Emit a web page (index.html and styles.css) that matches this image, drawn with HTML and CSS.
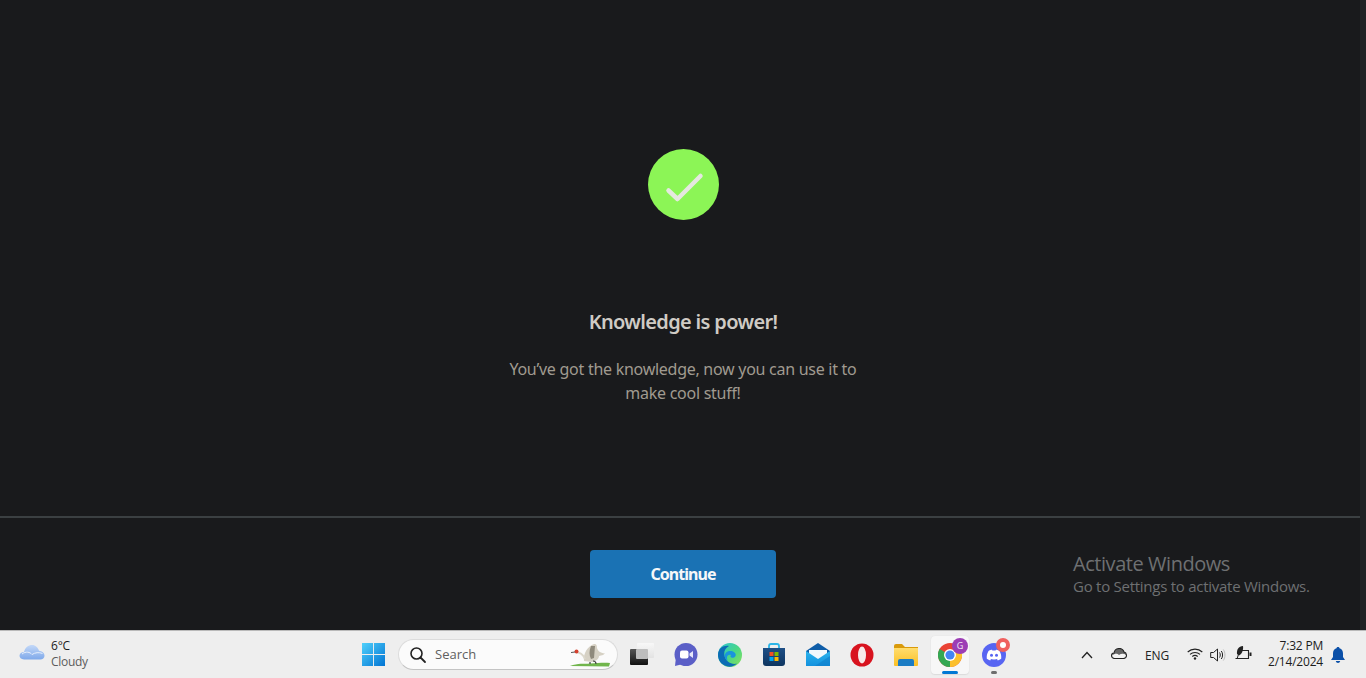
FILE: index.html
```html
<!DOCTYPE html>
<html lang="en">
<head>
<meta charset="utf-8">
<title>Knowledge is power!</title>
<link rel="stylesheet" href="styles.css">
</head>
<body>
<div class="app">
  <main class="content">
    <div class="badge">
      <svg viewBox="0 0 71 71" width="71" height="71"><circle cx="35.500" cy="35.500" r="35.500" fill="#8cf556"/><path d="M20.500 41.500 L29.500 50 L52.500 27" fill="none" stroke="#e5e8e0" stroke-width="4.500" stroke-linecap="round" stroke-linejoin="round"/></svg>
    </div>
    <h1 class="title">Knowledge is power!</h1>
    <p class="body-text">You’ve got the knowledge, now you can use it to make cool stuff!</p>
  </main>
  <footer class="actions">
    <button class="continue">Continue</button>
  </footer>
  <div class="watermark">
    <div class="wm-title">Activate Windows</div>
    <div class="wm-sub">Go to Settings to activate Windows.</div>
  </div>
</div>
<nav class="taskbar">
  <div class="weather">
    <svg class="weather-icon" viewBox="0 0 26 18" width="26" height="18"><defs><linearGradient id="cl" x1="0" y1="0" x2="0" y2="1"><stop offset="0" stop-color="#c3d8f8"/><stop offset="1" stop-color="#7fa9ea"/></linearGradient></defs><path d="M5 16.500 C2 16.500 .5 14.500 .5 12.800 C.5 10.500 2.500 9 5 9 C6 4.500 9.500 2 13 2 C16.500 2 19 4.500 20 7.800 C23 8 25.500 10 25.500 12.800 C25.500 15 23.500 16.500 21.500 16.500 Z" fill="url(#cl)"/><path d="M3 11 C7 8 11 9 13 11.500 C16 9.500 20 9 23.500 10.500" fill="none" stroke="#e6effc" stroke-width="1"/></svg>
    <div class="weather-text"><div class="temp">6°C</div><div class="cond">Cloudy</div></div>
  </div>
  <div class="center">
    <span class="tb-item"><svg viewBox="0 0 24 24" width="23" height="23"><defs><linearGradient id="win" x1="0" y1="0" x2="1" y2="1"><stop offset="0" stop-color="#4fd0fb"/><stop offset="1" stop-color="#0274d3"/></linearGradient></defs><path d="M0 0H11.500V11.500H0ZM12.500 0H24V11.500H12.500ZM0 12.500H11.500V24H0ZM12.500 12.500H24V24H12.500Z" fill="url(#win)"/></svg></span>
    <div class="search">
      <svg viewBox="0 0 18 18" width="18" height="18"><circle cx="7.500" cy="7.500" r="5.500" fill="none" stroke="#222" stroke-width="1.600"/><path d="M11.500 11.500 L16 16" stroke="#222" stroke-width="1.800" stroke-linecap="round"/></svg>
      <span class="search-label">Search</span>
      <svg class="crane" viewBox="0 0 40 24" width="40" height="24"><path d="M0 23 C8 20 14 21 20 20.500 C28 20 34 19.500 40 20 L39 23.500 Z" fill="#71b54c"/><path d="M14 18 C13 10 18 3 24 1 C26 .5 27 2 27 5 C28 8 30 10 35 10.500 L33 12 L29 13 C29 16 26 18 22 19 Z" fill="#d6d1c4"/><path d="M21 3 C19 8 19 12 21 16 L24 15 L25 3 Z" fill="#8f8a7c"/><path d="M15 16 C13 11 9 9 5 9" fill="none" stroke="#dcd8cc" stroke-width="2"/><circle cx="6.500" cy="8.500" r="2" fill="#d5402e"/><path d="M5 9 L1 9.500" stroke="#555" stroke-width="1"/><path d="M23 18 C25 18 26 19 26 21 M20 19 L20 21" stroke="#444" stroke-width="1.200" fill="none"/></svg>
    </div>
    <span class="tb-item"><svg viewBox="0 0 24 24" width="24" height="24"><defs><linearGradient id="tv1" x1="0" y1="0" x2="0" y2="1"><stop offset="0" stop-color="#f8f8f8"/><stop offset="1" stop-color="#e2e2e2"/></linearGradient><linearGradient id="tv2" x1="0" y1="0" x2="0" y2="1"><stop offset="0" stop-color="#555"/><stop offset="1" stop-color="#111"/></linearGradient></defs><rect x="0" y="6" width="18" height="16" rx="1" fill="url(#tv2)"/><rect x="7" y="0" width="17" height="15" rx="1" fill="url(#tv1)"/><rect x="6" y="6" width="12" height="10" rx="1" fill="#bdbdbd"/></svg></span>
    <span class="tb-item"><svg viewBox="0 0 24 24" width="24" height="24"><circle cx="12" cy="11.500" r="11.500" fill="#5b5fc7"/><path d="M1 23 L2 14 L9 21 Z" fill="#5b5fc7"/><rect x="6" y="7.500" width="8.500" height="8" rx="2" fill="#fff"/><path d="M15.500 10.500 L19 8 V15 L15.500 12.500 Z" fill="#e6e7fa"/></svg></span>
    <span class="tb-item"><svg viewBox="0 0 24 24" width="24" height="24"><defs><linearGradient id="ed" x1="0" y1="0" x2="1" y2="1"><stop offset="0" stop-color="#2ec4d8"/><stop offset=".5" stop-color="#48d688"/><stop offset="1" stop-color="#8be35a"/></linearGradient></defs><circle cx="12" cy="12" r="12" fill="url(#ed)"/><path d="M0 12 C0 5 6 2 11 3 C7 5 5.500 9 6.500 13 C8 19 14 22 19 20.500 C16 23.500 12 24.500 8 23 C3 21.500 0 17 0 12 Z" fill="#0c6cb5"/><path d="M6.500 13 C7 9 11 7 15 8.500 C18.500 10 18.500 13.500 16 14.500 C13 15.500 11.500 13.500 13 12 C9 11 8 15 10 18 C8 17 7 15 6.500 13 Z" fill="#1a94dd"/></svg></span>
    <span class="tb-item"><svg viewBox="0 0 24 24" width="24" height="24"><defs><linearGradient id="st" x1="0" y1="0" x2="0" y2="1"><stop offset="0" stop-color="#1e4f86"/><stop offset="1" stop-color="#0e3560"/></linearGradient></defs><path d="M7 6 V3 Q7 1 9 1 H15 Q17 1 17 3 V6" fill="none" stroke="#2bb5e8" stroke-width="1.800"/><path d="M1 5 H23 V20 Q23 23 20 23 H4 Q1 23 1 20 Z" fill="url(#st)"/><rect x="7.500" y="9" width="4" height="4" fill="#f25022"/><rect x="12.500" y="9" width="4" height="4" fill="#7fba00"/><rect x="7.500" y="14" width="4" height="4" fill="#00a4ef"/><rect x="12.500" y="14" width="4" height="4" fill="#ffb900"/></svg></span>
    <span class="tb-item"><svg viewBox="0 0 24 24" width="24" height="24"><defs><linearGradient id="ml" x1="0" y1="0" x2="0" y2="1"><stop offset="0" stop-color="#2bb3ec"/><stop offset="1" stop-color="#1391de"/></linearGradient></defs><path d="M0 8 L12 0 L24 8 V10 H0 Z" fill="#0f5da8"/><path d="M3 7 H21 V13 L12 17 L3 13 Z" fill="#f2f8fc"/><path d="M0 8 L12 16 L24 8 V23 H0 Z" fill="url(#ml)"/><path d="M24 23 H9 L24 13 Z" fill="#0f7dca" opacity=".6"/></svg></span>
    <span class="tb-item"><svg viewBox="0 0 24 24" width="24" height="24"><circle cx="12" cy="12" r="11.500" fill="#d8131f"/><ellipse cx="12" cy="12" rx="4" ry="8.500" fill="#f7e9e9"/></svg></span>
    <span class="tb-item"><svg viewBox="0 0 24 24" width="24" height="24"><defs><linearGradient id="fo" x1="0" y1="0" x2="0" y2="1"><stop offset="0" stop-color="#ffdd6e"/><stop offset="1" stop-color="#fbbf24"/></linearGradient></defs><path d="M0 3 Q0 1 2 1 H8 L11 4 H24 V10 H0 Z" fill="#d99a0b"/><path d="M0 5 H24 V22 Q24 23 23 23 H1 Q0 23 0 22 Z" fill="url(#fo)"/><path d="M4 23 V18 Q4 16 6 16 H18 Q20 16 20 18 V23 Z" fill="#1b7cc4"/></svg></span>
    <span class="tb-item active"><svg viewBox="0 0 24 24" width="24" height="24"><circle cx="12" cy="12" r="12" fill="#ea4335"/><path d="M12 12 L22.400 6 A12 12 0 0 1 12 24 Z" fill="#fbc02d"/><path d="M12 12 L12 24 A12 12 0 0 1 1.600 6 Z" fill="#34a853"/><circle cx="12" cy="12" r="6" fill="#fff"/><circle cx="12" cy="12" r="4.600" fill="#4285f4"/></svg><span class="avatar">G</span><span class="underline"></span></span>
    <span class="tb-item discord"><svg viewBox="0 0 24 24" width="24" height="24"><circle cx="12" cy="12" r="12" fill="#5865f2"/><path d="M6.500 8 C8 7 9.500 6.800 10 6.800 L10.400 7.600 C11.500 7.400 12.500 7.400 13.600 7.600 L14 6.800 C14.500 6.800 16 7 17.500 8 C19 10.500 19.500 13 19.200 15.800 C18 16.700 16.800 17.200 15.800 17.400 L15 16.100 L16.300 15.400 C13.500 16.700 10.500 16.700 7.700 15.400 L9 16.100 L8.200 17.400 C7.200 17.200 6 16.700 4.800 15.800 C4.500 13 5 10.500 6.500 8 Z" fill="#fff"/><circle cx="9.500" cy="12.200" r="1.500" fill="#5865f2"/><circle cx="14.500" cy="12.200" r="1.500" fill="#5865f2"/></svg><span class="dot"></span><span class="running"></span></span>
  </div>
  <div class="tray">
    <svg class="chev" viewBox="0 0 12 8" width="12" height="8"><path d="M1 7 L6 1.500 L11 7" fill="none" stroke="#222" stroke-width="1.300"/></svg>
    <svg class="cloud" viewBox="0 0 16 11" width="16" height="11"><path d="M3.500 10.500 C1.500 10.500 .5 9 .5 7.500 C.5 6 1.800 5 3 5 C3.500 2 6 .5 8.500 .5 C11 .5 12.500 2.500 13 4 C14.500 4.300 15.500 6 15.500 7.500 C15.500 9.500 14 10.500 12.500 10.500 Z" fill="#f4f4f4"/><path d="M1 7.500 C4 5 6.500 5.500 8 7 C10 5.500 13 5.300 15 7 C15 5 14 4 13 4 C12.500 2.500 11 .5 8.500 .5 C6 .5 3.500 2 3 5 C2 5 1.300 6 1 7.500 Z" fill="#666"/><path d="M3.500 10.500 C1.500 10.500 .5 9 .5 7.500 C.5 6 1.800 5 3 5 C3.500 2 6 .5 8.500 .5 C11 .5 12.500 2.500 13 4 C14.500 4.300 15.500 6 15.500 7.500 C15.500 9.500 14 10.500 12.500 10.500 Z" fill="none" stroke="#222" stroke-width="1.100"/></svg>
    <span class="lang">ENG</span>
    <svg class="wifi" viewBox="0 0 16 12" width="16" height="12"><path d="M.7 4 C4.800 .2 11.200 .2 15.300 4 M3 6.300 C5.800 3.800 10.200 3.800 13 6.300 M5.300 8.500 C6.800 7.300 9.200 7.300 10.700 8.500" fill="none" stroke="#222" stroke-width="1.100"/><circle cx="8" cy="10.500" r="1.200" fill="#222"/></svg>
    <svg class="vol" viewBox="0 0 16 14" width="16" height="14"><path d="M.7 4.500 H3.500 L7.500 1 V13 L3.500 9.500 H.7 Z" fill="none" stroke="#222" stroke-width="1"/><path d="M9.500 4.500 C10.500 5.800 10.500 8.200 9.500 9.500 M11.300 3 C13 5 13 9 11.300 11" fill="none" stroke="#222" stroke-width="1"/><path d="M13.300 1.500 C15.500 4.500 15.500 9.500 13.300 12.500" fill="none" stroke="#bbb" stroke-width="1"/></svg>
    <svg class="batt" viewBox="0 0 17 14" width="17" height="14"><path d="M7 4.500 H13.500 V12.500 H.5" fill="none" stroke="#222" stroke-width="1.100"/><rect x="14.500" y="6.500" width="2" height="3.500" fill="#222"/><path d="M8 0 C3.500 .5 1.500 3.500 2 8 L4 9.500 C7 8 8.500 4 8 0 Z" fill="#222"/><path d="M2 13 L4.500 5" stroke="#222" stroke-width="1"/></svg>
    <div class="clock"><div>7:32 PM</div><div>2/14/2024</div></div>
    <svg class="bell" viewBox="0 0 14 16" width="14" height="16"><path d="M7 0 C8 0 8.500 .6 8.500 1.300 C11 2 12 4 12 6.500 V10 L14 13 H0 L2 10 V6.500 C2 4 3 2 5.500 1.300 C5.500 .6 6 0 7 0 Z" fill="#0a4fa8"/><path d="M4.800 14 H9.200 C9 15.300 8 16 7 16 C6 16 5 15.300 4.800 14 Z" fill="#0a4fa8"/></svg>
  </div>
</nav>
</body>
</html>
```
FILE: styles.css
```css
* { box-sizing: border-box; }
html, body { margin: 0; padding: 0; height: 100%; overflow: hidden; }
body { display: flex; flex-direction: column; background: #191a1c; font-family: "Noto Sans", sans-serif; }

.app { position: relative; flex: 1; display: flex; flex-direction: column; border-right: 6px solid #202225; min-height: 0; }

.content { height: 518px; border-bottom: 2px solid #3b4042; display: flex; flex-direction: column; align-items: center; padding-top: 149px; padding-left: 6px; }
.badge { width: 71px; height: 71px; margin-bottom: 89px; }
.badge svg { display: block; }
.title { margin: 0; font-size: 20px; line-height: 26px; font-weight: 600; color: #cfcbc5; letter-spacing: -.66px; }
.body-text { margin: 22px 0 0; width: 360px; text-align: center; font-size: 16px; line-height: 24px; color: #a09a90; letter-spacing: -.27px; }

.actions { flex: 1; display: flex; justify-content: center; padding-top: 32px; padding-left: 6px; }
.continue { width: 186px; height: 48px; border: 0; border-radius: 4px; background: #1a72b4; color: #f5f7f9; font-family: "Noto Sans", sans-serif; font-weight: 700; font-size: 16px; letter-spacing: -.95px; padding-bottom: 2px; }

.watermark { position: absolute; left: 1073px; top: 552px; color: #6e7072; font-family: "Open Sans", sans-serif; }
.wm-title { font-size: 20px; line-height: 24px; letter-spacing: -.45px; }
.wm-sub { font-size: 15px; line-height: 20px; letter-spacing: -.26px; }

.taskbar { height: 48px; flex: none; background: #eeeeee; border-top: 1px solid #b9b9b9; display: flex; align-items: center; position: relative; font-family: "Open Sans", sans-serif; }

.weather { position: absolute; left: 19px; top: 7px; display: flex; gap: 6px; align-items: flex-start; }
.weather-icon { margin-top: 5px; }
.temp { font-size: 12px; line-height: 16px; color: #1c1c1c; letter-spacing: -.2px; }
.cond { font-size: 12px; line-height: 16px; color: #5c5c5c; letter-spacing: -.3px; }

.center { position: absolute; left: 351px; top: 0; height: 47px; display: flex; align-items: center; }
.tb-item { width: 44px; height: 44px; display: flex; align-items: center; justify-content: center; position: relative; flex: none; }
.tb-item svg { display: block; }
.active { width: 38px; height: 38px; margin: 0 3px; background: #f7f7f7; border-radius: 4px; box-shadow: 0 1px 1px #dcdcdc, 0 0 1px #d8d8d8; }
.underline { position: absolute; left: 11px; bottom: 0; width: 16px; height: 3px; border-radius: 2px; background: #0078d4; }
.avatar { position: absolute; left: 21px; top: 2px; width: 16px; height: 16px; border-radius: 50%; background: #9c3db5; color: #f3e6f6; font-size: 9px; line-height: 16px; text-align: center; }
.dot { position: absolute; left: 24px; top: 5px; width: 14px; height: 14px; border-radius: 50%; background: #f0605e; border: 4px solid #f0605e; }
.dot::after { content: ""; display: block; width: 6px; height: 6px; border-radius: 50%; background: #fff; }
.running { position: absolute; left: 19px; bottom: 3px; width: 6px; height: 3px; border-radius: 2px; background: #6d6d6d; }

.search { width: 220px; height: 31px; margin: 0 2px 0 3px; border-radius: 16px; background: #fbfbfb; border: 1px solid #dcdcdc; border-bottom-color: #c4c4c4; display: flex; align-items: center; padding-left: 10px; flex: none; }
.search-label { margin-left: 8px; padding-bottom: 2px; font-size: 13px; color: #5f5f5f; flex: 1; }
.crane { margin-right: 7px; margin-top: 1px; }

.tray { position: absolute; left: 0; right: 0; top: 0; height: 47px; pointer-events: none; }
.tray > * { position: absolute; }
.chev { left: 1081px; top: 20px; }
.cloud { left: 1111px; top: 17px; }
.lang { left: 1145px; top: 16px; font-size: 12px; line-height: 17px; color: #222; letter-spacing: -.1px; }
.wifi { left: 1187px; top: 17px; }
.vol { left: 1210px; top: 17px; }
.batt { left: 1235px; top: 15px; }
.clock { right: 43px; top: 7px; text-align: right; font-size: 12px; line-height: 16px; color: #1c1c1c; letter-spacing: -.2px; }
.bell { left: 1331px; top: 16px; }
```
